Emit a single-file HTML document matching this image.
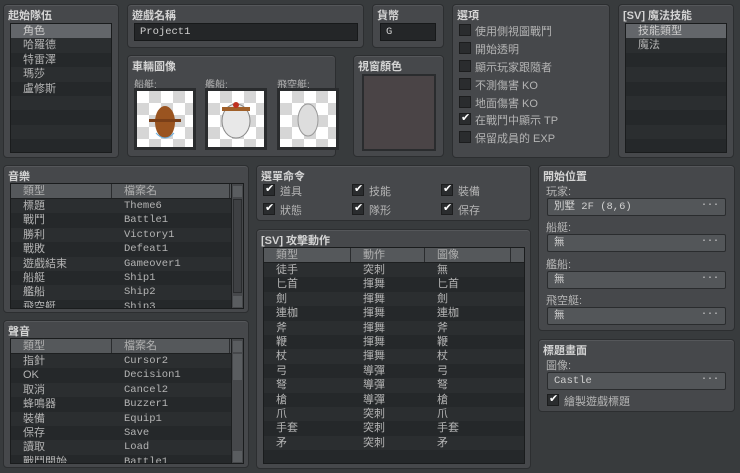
<!DOCTYPE html>
<html><head><meta charset="utf-8"><style>
*{margin:0;padding:0;box-sizing:border-box}
body{width:740px;height:473px;background:#383b3d;font-family:"Liberation Sans","Noto Sans CJK TC",sans-serif;font-size:11px;color:#b4b4b4;position:relative;overflow:hidden}
.p{position:absolute;background:#46484b;border:1px solid #2c2e30;border-radius:4px;box-shadow:inset 0 1px 0 #55575a}
.t{position:absolute;left:4px;top:2px;font-weight:bold;color:#d4d4d4;font-size:11px}
.a{position:absolute}
.list{position:absolute;background:#25282a;border:1px solid #1a1c1d;overflow:hidden}
.row{height:14.4px;line-height:14.4px;padding-left:12px;white-space:nowrap}
.row:nth-child(even){background:#2b2e30}
.sel{background:#63666a!important;color:#ccc}
.inp{position:absolute;background:#242628;border:1px solid #17191a;font-family:"Liberation Mono","Noto Sans CJK TC",monospace;font-size:10.5px;line-height:16px;padding-left:5px;color:#d0d0d0}
.sinp{position:absolute;background:#535659;border:1px solid #2a2c2e;border-radius:2px;height:18px;line-height:16px;padding-left:6px;font-family:"Liberation Mono","Noto Sans CJK TC",monospace;font-size:10.5px;color:#d0d0d0}
.sinp:after{content:"···";position:absolute;right:6px;top:-1px;font-size:10px}
.cb{position:absolute;width:12px;height:12px;background:#2a2c2e;border:1px solid #1c1d1e}
.ck:after{content:"✔";position:absolute;left:1px;top:-3px;font-size:11px;color:#fff}
.lab{position:absolute;color:#b4b4b4;white-space:nowrap}
.hd{height:15px;background:#55585b;display:flex;color:#b0b0b0;line-height:15px;border-bottom:1px solid #1d1f20}
.hd div{border-right:1px solid #2a2c2e;padding-left:12px}
.tr{display:flex;height:14.4px;line-height:14.4px;white-space:nowrap}
.tr:nth-child(odd){background:#2b2e30}
.tr div{padding-left:12px}
.mono{font-family:"Liberation Mono","Noto Sans CJK TC",monospace;font-size:10.5px}
.img{position:absolute;width:62px;height:62px;border:3px solid #2a2c2e;background-color:#fff;background-image:linear-gradient(45deg,#d6d6d6 25%,transparent 25%,transparent 75%,#d6d6d6 75%),linear-gradient(45deg,#d6d6d6 25%,transparent 25%,transparent 75%,#d6d6d6 75%);background-size:24px 24px;background-position:0 0,12px 12px}
.sb{position:absolute;width:12px;background:#46484b;border-left:1px solid #1d1f20}
</style></head><body>

<div class="p" style="left:3px;top:4px;width:116px;height:154px"><div class="t">起始隊伍</div>
<div class="list" style="left:6px;top:18px;width:102px;height:130px">
<div class="row sel">角色</div><div class="row">哈羅德</div><div class="row">特雷澤</div><div class="row">瑪莎</div><div class="row">盧修斯</div><div class="row"></div><div class="row"></div><div class="row"></div><div class="row"></div>
</div></div>

<div class="p" style="left:127px;top:4px;width:237px;height:44px"><div class="t">遊戲名稱</div>
<div class="inp" style="left:6px;top:18px;width:224px;height:18px">Project1</div></div>

<div class="p" style="left:372px;top:4px;width:72px;height:44px"><div class="t">貨幣</div>
<div class="inp" style="left:7px;top:18px;width:56px;height:18px">G</div></div>

<div class="p" style="left:127px;top:55px;width:209px;height:102px"><div class="t">車輛圖像</div>
<div class="lab" style="left:6px;top:20px;font-size:10px">船艇:</div>
<div class="lab" style="left:77px;top:20px;font-size:10px">艦船:</div>
<div class="lab" style="left:149px;top:20px;font-size:10px">飛空艇:</div>
<div class="img" style="left:6px;top:32px"><svg width="56" height="56"><ellipse cx="28" cy="31" rx="10" ry="16" fill="#9a5420"/><rect x="12" y="28" width="32" height="3" fill="#7a3f18"/><path d="M19 42 Q28 52 37 42" stroke="#6ab0e0" fill="none"/></svg></div>
<div class="img" style="left:77px;top:32px"><svg width="56" height="56"><ellipse cx="28" cy="30" rx="14" ry="17" fill="#e8e8e8" stroke="#888"/><rect x="14" y="16" width="28" height="4" fill="#a0602a"/><circle cx="28" cy="14" r="3" fill="#c03020"/></svg></div>
<div class="img" style="left:149px;top:32px"><svg width="56" height="56"><ellipse cx="28" cy="29" rx="10" ry="16" fill="#ddd" stroke="#999"/></svg></div>
</div>

<div class="p" style="left:353px;top:55px;width:91px;height:102px"><div class="t">視窗顏色</div>
<div class="a" style="left:8px;top:18px;width:74px;height:77px;background:#4a4446;border:2px solid #2a2c2e"></div></div>

<div class="p" style="left:452px;top:4px;width:158px;height:154px"><div class="t">選項</div>
<div class="cb" style="left:6px;top:19px"></div><div class="lab" style="left:22px;top:18px">使用側視圖戰鬥</div>
<div class="cb" style="left:6px;top:37px"></div><div class="lab" style="left:22px;top:36px">開始透明</div>
<div class="cb" style="left:6px;top:55px"></div><div class="lab" style="left:22px;top:54px">顯示玩家跟隨者</div>
<div class="cb" style="left:6px;top:73px"></div><div class="lab" style="left:22px;top:72px">不測傷害 KO</div>
<div class="cb" style="left:6px;top:91px"></div><div class="lab" style="left:22px;top:90px">地面傷害 KO</div>
<div class="cb ck" style="left:6px;top:108px"></div><div class="lab" style="left:22px;top:107px">在戰鬥中顯示 TP</div>
<div class="cb" style="left:6px;top:126px"></div><div class="lab" style="left:22px;top:125px">保留成員的 EXP</div>
</div>

<div class="p" style="left:618px;top:4px;width:116px;height:154px"><div class="t">[SV] 魔法技能</div>
<div class="list" style="left:6px;top:18px;width:102px;height:130px">
<div class="row sel">技能類型</div><div class="row">魔法</div><div class="row"></div><div class="row"></div><div class="row"></div><div class="row"></div><div class="row"></div><div class="row"></div><div class="row"></div>
</div></div>

<div class="p" style="left:3px;top:165px;width:246px;height:148px"><div class="t">音樂</div>
<div class="list" style="left:6px;top:17px;width:234px;height:126px">
<div class="hd"><div style="width:101px">類型</div><div style="width:118px">檔案名</div></div>
<div><div class="tr"><div style="width:101px">標題</div><div class="mono">Theme6</div></div><div class="tr"><div style="width:101px">戰鬥</div><div class="mono">Battle1</div></div><div class="tr"><div style="width:101px">勝利</div><div class="mono">Victory1</div></div><div class="tr"><div style="width:101px">戰敗</div><div class="mono">Defeat1</div></div><div class="tr"><div style="width:101px">遊戲結束</div><div class="mono">Gameover1</div></div><div class="tr"><div style="width:101px">船艇</div><div class="mono">Ship1</div></div><div class="tr"><div style="width:101px">艦船</div><div class="mono">Ship2</div></div><div class="tr"><div style="width:101px">飛空艇</div><div class="mono">Ship3</div></div></div>
<div class="sb" style="left:220px;top:0;height:124px"><div style="position:absolute;left:1px;top:2px;width:9px;height:11px;background:#5a5d60"></div><div style="position:absolute;left:1px;top:15px;width:9px;height:94px;background:#3e4043;border:1px solid #2a2c2e"></div><div style="position:absolute;left:1px;top:112px;width:9px;height:11px;background:#5a5d60"></div></div>
</div></div>

<div class="p" style="left:3px;top:320px;width:246px;height:148px"><div class="t">聲音</div>
<div class="list" style="left:6px;top:17px;width:234px;height:126px">
<div class="hd"><div style="width:101px">類型</div><div style="width:118px">檔案名</div></div>
<div><div class="tr"><div style="width:101px">指針</div><div class="mono">Cursor2</div></div><div class="tr"><div style="width:101px">OK</div><div class="mono">Decision1</div></div><div class="tr"><div style="width:101px">取消</div><div class="mono">Cancel2</div></div><div class="tr"><div style="width:101px">蜂鳴器</div><div class="mono">Buzzer1</div></div><div class="tr"><div style="width:101px">裝備</div><div class="mono">Equip1</div></div><div class="tr"><div style="width:101px">保存</div><div class="mono">Save</div></div><div class="tr"><div style="width:101px">讀取</div><div class="mono">Load</div></div><div class="tr"><div style="width:101px">戰鬥開始</div><div class="mono">Battle1</div></div></div>
<div class="sb" style="left:220px;top:0;height:124px"><div style="position:absolute;left:1px;top:2px;width:9px;height:11px;background:#5a5d60"></div><div style="position:absolute;left:1px;top:15px;width:9px;height:26px;background:#5a5d60"></div><div style="position:absolute;left:1px;top:112px;width:9px;height:11px;background:#5a5d60"></div></div>
</div></div>

<div class="p" style="left:256px;top:165px;width:275px;height:56px"><div class="t">選單命令</div>
<div class="cb ck" style="left:6px;top:18px"></div><div class="lab" style="left:23px;top:17px">道具</div>
<div class="cb ck" style="left:95px;top:18px"></div><div class="lab" style="left:112px;top:17px">技能</div>
<div class="cb ck" style="left:184px;top:18px"></div><div class="lab" style="left:201px;top:17px">裝備</div>
<div class="cb ck" style="left:6px;top:37px"></div><div class="lab" style="left:23px;top:36px">狀態</div>
<div class="cb ck" style="left:95px;top:37px"></div><div class="lab" style="left:112px;top:36px">隊形</div>
<div class="cb ck" style="left:184px;top:37px"></div><div class="lab" style="left:201px;top:36px">保存</div>
</div>

<div class="p" style="left:256px;top:229px;width:275px;height:240px"><div class="t">[SV] 攻擊動作</div>
<div class="list" style="left:6px;top:17px;width:262px;height:217px">
<div class="hd"><div style="width:87px">類型</div><div style="width:74px">動作</div><div style="width:86px">圖像</div></div>
<div><div class="tr"><div style="width:87px">徒手</div><div style="width:74px">突刺</div><div>無</div></div><div class="tr"><div style="width:87px">匕首</div><div style="width:74px">揮舞</div><div>匕首</div></div><div class="tr"><div style="width:87px">劍</div><div style="width:74px">揮舞</div><div>劍</div></div><div class="tr"><div style="width:87px">連枷</div><div style="width:74px">揮舞</div><div>連枷</div></div><div class="tr"><div style="width:87px">斧</div><div style="width:74px">揮舞</div><div>斧</div></div><div class="tr"><div style="width:87px">鞭</div><div style="width:74px">揮舞</div><div>鞭</div></div><div class="tr"><div style="width:87px">杖</div><div style="width:74px">揮舞</div><div>杖</div></div><div class="tr"><div style="width:87px">弓</div><div style="width:74px">導彈</div><div>弓</div></div><div class="tr"><div style="width:87px">弩</div><div style="width:74px">導彈</div><div>弩</div></div><div class="tr"><div style="width:87px">槍</div><div style="width:74px">導彈</div><div>槍</div></div><div class="tr"><div style="width:87px">爪</div><div style="width:74px">突刺</div><div>爪</div></div><div class="tr"><div style="width:87px">手套</div><div style="width:74px">突刺</div><div>手套</div></div><div class="tr"><div style="width:87px">矛</div><div style="width:74px">突刺</div><div>矛</div></div><div class="tr"><div style="width:87px">&nbsp;</div></div></div>
</div></div>

<div class="p" style="left:538px;top:165px;width:197px;height:166px"><div class="t">開始位置</div>
<div class="lab" style="left:7px;top:17px">玩家:</div><div class="sinp" style="left:8px;top:32px;width:179px">別墅 2F (8,6)</div>
<div class="lab" style="left:7px;top:53px">船艇:</div><div class="sinp" style="left:8px;top:68px;width:179px">無</div>
<div class="lab" style="left:7px;top:90px">艦船:</div><div class="sinp" style="left:8px;top:105px;width:179px">無</div>
<div class="lab" style="left:7px;top:126px">飛空艇:</div><div class="sinp" style="left:8px;top:141px;width:179px">無</div>
</div>

<div class="p" style="left:538px;top:339px;width:197px;height:73px"><div class="t">標題畫面</div>
<div class="lab" style="left:7px;top:17px">圖像:</div><div class="sinp" style="left:8px;top:32px;width:179px">Castle</div>
<div class="cb ck" style="left:8px;top:54px"></div><div class="lab" style="left:25px;top:53px">繪製遊戲標題</div>
</div>
</body></html>
